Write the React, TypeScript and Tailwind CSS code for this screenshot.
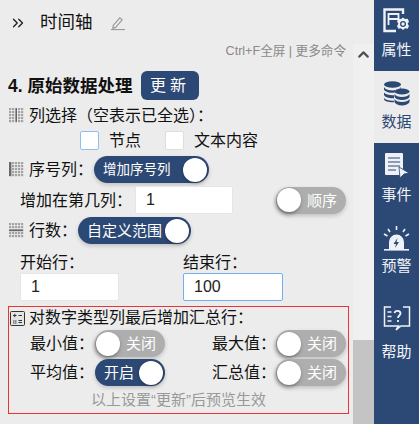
import { ChevronsRight, ChevronUp } from "lucide-react";

const Dots = ({ skipC, skipR }: { skipC?: number; skipR?: number }) => (
  <>
    {Array.from({ length: 5 }).flatMap((_, r) =>
      Array.from({ length: 5 }).map((_, c) =>
        c === skipC || r === skipR ? null : (
          <rect key={`${r}-${c}`} x={c * 3} y={r * 3} width="2.2" height="2.2" fill="#a4a4a4" />
        )
      )
    )}
  </>
);

const GridIcon = ({ kind }: { kind: "col" | "seq" | "row" }) => (
  <svg width="15" height="15" viewBox="0 0 15 15" className="shrink-0">
    {kind === "col" && (
      <>
        <Dots skipC={2} />
        <rect x="6.4" y="0" width="1.6" height="14.200" fill="#666" />
      </>
    )}
    {kind === "seq" && (
      <>
        <Dots skipC={0} />
        <rect x="0" y="0" width="2.4" height="14.200" fill="#6a6a6a" />
      </>
    )}
    {kind === "row" && (
      <>
        <Dots skipR={2} />
        <rect x="0" y="6.400" width="14.200" height="1.800" fill="#666" />
      </>
    )}
  </svg>
);

function Toggle({ label, on, width, small }: { label: string; on: boolean; width: string; small?: boolean }) {
  const text = small ? "text-[13.500px]" : "text-[15px]";
  return (
    <div
      className={`flex h-[27px] items-center justify-between rounded-full shadow-[0_2px_4px_rgba(0,0,0,0.18)] ${width} ${
        on ? "bg-[#2c4874] pl-[9px] pr-[2px]" : "bg-[#aeaeae] pl-[1px] pr-[9px]"
      }`}
    >
      {!on && <span className="h-[24px] w-[24px] rounded-full bg-white shadow-[-1px_2px_4px_rgba(0,0,0,0.4)]" />}
      <span className={`${text} leading-none whitespace-nowrap text-white`}>{label}</span>
      {on && <span className="h-[24px] w-[24px] rounded-full bg-white shadow-[0_1px_3px_rgba(0,0,0,0.35)]" />}
    </div>
  );
}

function RailItem({
  label,
  active,
  children,
  box,
  gap,
}: {
  label: string;
  active?: boolean;
  children: React.ReactNode;
  box: string;
  gap: string;
}) {
  return (
    <div className={`flex flex-col items-center ${box} ${active ? "bg-[#ececec] text-[#2c4874]" : "bg-[#2c4874] text-[#f2f5fa]"}`}>
      {children}
      <span className={`text-[15px] leading-[20px] ${gap}`}>{label}</span>
    </div>
  );
}

function Field({ value, focus, width }: { value: string; focus?: boolean; width: string }) {
  return (
    <div
      className={`flex h-[28px] items-center rounded-[2px] bg-white pl-[10px] text-[16px] text-[#222] ${width} ${
        focus ? "border border-[#6fb0f0]" : "border border-[#e6e6e6]"
      }`}
    >
      {value}
    </div>
  );
}

export default function App() {
  return (
    <div className="flex h-[424px] w-[419px] overflow-hidden bg-[#ececec] font-['Liberation_Sans','Noto_Sans_CJK_SC',sans-serif] text-[#111]">
      <div className="flex w-[353px] flex-col">
        <div className="flex h-[44px] items-center pl-[9px] pt-[1px]">
          <ChevronsRight size={18} strokeWidth={1.8} className="text-[#222]" />
          <span className="ml-[13px] text-[17.500px] leading-none">时间轴</span>
          <svg width="15" height="16" viewBox="0 0 16 16" className="ml-[17px] text-[#999]" fill="none" stroke="currentColor" strokeWidth="1.200">
            <path d="M3.500 10.500 10.500 2.500l2.500 2.200-7 8-3 .8z" />
            <path d="M1 15h15" />
          </svg>
        </div>
        <div className="mt-[-1px] pr-[7px] text-right text-[12.600px] leading-[16px] text-[#8a8a8a]">
          Ctrl+F全屏 | 更多命令
        </div>
        <div className="mt-[12px] flex items-center pl-[8px]">
          <span className="w-[133px] pt-[3px] text-[17.500px] leading-none font-bold whitespace-nowrap">4. 原始数据处理</span>
          <span className="flex h-[29px] w-[58px] items-center justify-center rounded-[6px] bg-[#2c4874] text-[16px] tracking-[4px] text-white">
            更新
          </span>
        </div>
        <div className="mt-[5px] flex h-[20px] items-center gap-[5px] pl-[9px] text-[16px] whitespace-nowrap">
          <GridIcon kind="col" />
          <span className="pt-[1px]">列选择（空表示已全选）：</span>
        </div>
        <div className="mt-[6px] flex h-[19px] items-center pl-[80px] text-[16px]">
          <span className="h-[19px] w-[19px] rounded-[2px] border border-[#8cc0f2] bg-white" />
          <span className="ml-[10px]">节点</span>
          <span className="ml-[24px] h-[19px] w-[19px] rounded-[2px] border border-[#dddddd] bg-white" />
          <span className="ml-[10px]">文本内容</span>
        </div>
        <div className="mt-[6px] flex items-center pl-[9px] text-[16px]">
          <GridIcon kind="seq" />
          <span className="ml-[5px] w-[65px]">序号列：</span>
          <Toggle label="增加序号列" on small width="w-[115px]" />
        </div>
        <div className="mt-[3px] flex items-center pl-[20px] text-[16px]">
          <span className="w-[115px] pt-[1px] whitespace-nowrap">增加在第几列：</span>
          <Field value="1" width="w-[98px]" />
          <div className="ml-[43px]">
            <Toggle label="顺序" on={false} width="w-[70px]" />
          </div>
        </div>
        <div className="mt-[3px] flex items-center pl-[9px] text-[16px]">
          <GridIcon kind="row" />
          <span className="ml-[5px] w-[49px]">行数：</span>
          <Toggle label="自定义范围" on width="w-[113px]" />
        </div>
        <div className="mt-[6px] grid w-[283px] grid-cols-[163px_100px] pl-[20px] text-[16px]">
          <div className="flex flex-col">
            <span className="h-[23px] leading-[26px]">开始行：</span>
            <Field value="1" width="w-[99px]" />
          </div>
          <div className="flex flex-col">
            <span className="h-[23px] leading-[26px]">结束行：</span>
            <Field value="100" focus width="w-[100px]" />
          </div>
        </div>
        <div className="mt-[5px] ml-[8px] flex h-[108px] w-[341px] flex-col border border-[#ee3333] text-[16px]">
          <div className="flex h-[22px] items-center gap-[4px] pl-[1px] whitespace-nowrap">
            <svg width="15" height="15" viewBox="0 0 15 15" fill="#e4e4e4" stroke="#333" className="shrink-0">
              <rect x=".5" y=".5" width="14" height="14" rx="1" />
              <path d="M3 4.500h3.500M4.750 2.800v3.400M8.500 4.500h3.500M3 10h1.500M5 10h1.500M3 12h1.500M5 12h1.500M8.500 9.500h3.500M8.500 11.500h3.500" fill="none" />
            </svg>
            <span>对数字类型列最后增加汇总行：</span>
          </div>
          <div className="mt-[1px] grid grid-cols-[182px_auto] gap-y-[2px] pl-[21px]">
            <div className="flex items-center">
              <span className="w-[65px]">最小值：</span>
              <Toggle label="关闭" on={false} width="w-[70px]" />
            </div>
            <div className="flex items-center">
              <span className="w-[64px]">最大值：</span>
              <Toggle label="关闭" on={false} width="w-[70px]" />
            </div>
            <div className="flex items-center">
              <span className="w-[65px]">平均值：</span>
              <Toggle label="开启" on width="w-[70px]" />
            </div>
            <div className="flex items-center">
              <span className="w-[64px]">汇总值：</span>
              <Toggle label="关闭" on={false} width="w-[70px]" />
            </div>
          </div>
          <div className="mt-[5px] text-center text-[15px] leading-[18px] text-[#999]">
            以上设置“更新”后预览生效
          </div>
        </div>
      </div>

      <div className="flex w-[21px] flex-col pt-[44px]">
        <div className="flex flex-1 flex-col bg-[#f0f0f0]">
          <div className="flex h-[21px] items-center justify-center">
            <ChevronUp size={17} strokeWidth={3} className="text-[#505050]" />
          </div>
          <div className="flex-1" />
          <div className="h-[84px] bg-[#c4c4c4]" />
        </div>
      </div>

      <div className="flex w-[45px] flex-col bg-[#2c4874]">
        <RailItem label="属性" box="h-[71px] shrink-0 pt-[8px]" gap="mt-[6px]">
          <svg width="27" height="26" viewBox="0 0 27 26" fill="none" className="shrink-0">
            <path d="M20 6V1.500H1.500V23H13" stroke="#eef2f8" strokeWidth="2.400" />
            <path d="M5.500 6h10v5h-10zM5.500 11v6" stroke="#eef2f8" strokeWidth="1.800" />
            <path d="M20 9.500l2 1.600 2.600-.4 1.400 2.800-1.400 2.200 1.400 2.200-1.400 2.800-2.600-.4-2 1.600-2-1.600-2.600.4-1.400-2.800 1.400-2.200-1.400-2.200 1.400-2.800 2.600.4z" fill="#eef2f8" />
            <circle cx="20" cy="16" r="3" fill="#2c4874" />
            <circle cx="20" cy="16" r="1.700" fill="#eef2f8" />
          </svg>
        </RailItem>
        <RailItem label="数据" active box="h-[72px] shrink-0 pt-[10px]" gap="mt-[5px]">
          <svg width="27" height="26" viewBox="0 0 27 26" fill="#2c4874" className="shrink-0">
            <ellipse cx="9.500" cy="3.500" rx="8.500" ry="3.200" />
            <path d="M1 6c1 2.400 5 3.400 8.500 3.400S17 8.400 18 6v1.500c-3 .3-6 1.500-6.500 4.300-4 .3-9.500-.6-10.500-3.300zM1 11.500c1.500 2 6 3 10 2.700v3c-4 .3-9-.8-10-3.200zM1 17c1.500 2 6 3 10 2.700v1.500c-4 .3-10-.7-10-3.200z" />
            <ellipse cx="19" cy="10.500" rx="7.500" ry="3" />
            <path d="M11.500 13c1 2 4 3 7.500 3s6.500-1 7.500-3v3c-1 2-4 3-7.500 3s-6.500-1-7.500-3zM11.500 18c1 2 4 3 7.500 3s6.500-1 7.500-3v3c-1 2.200-4 3.500-7.500 3.500s-6.500-1.300-7.500-3.500z" />
          </svg>
        </RailItem>
        <RailItem label="事件" box="h-[70px] shrink-0 pt-[9px]" gap="mt-[5px]">
          <svg width="26" height="28" viewBox="0 0 26 28" fill="#eef2f8" className="shrink-0">
            <path d="M2 1h16a1 1 0 0 1 1 1v15l-4 6H2a1 1 0 0 1-1-1V2a1 1 0 0 1 1-1z" />
            <path d="M4 6h12M4 10h12M4 14h12M4 18h8" stroke="#2c4874" strokeWidth="1.200" />
            <path d="M15 15l10 6-5 1-4 4z" stroke="#2c4874" strokeWidth=".8" />
          </svg>
        </RailItem>
        <RailItem label="预警" box="h-[70px] shrink-0 pt-[12px]" gap="mt-[4px]">
          <svg width="27" height="27" viewBox="0 0 27 27" fill="#eef2f8" className="shrink-0">
            <path d="M6 24v-7a7.500 7.500 0 0 1 15 0v7z" />
            <path d="M1 24h25v1.600H1z" />
            <path d="M13.500 1v4M5 4l2 3M22 4l-2 3M1 9l3.500 2M26 9l-3.500 2" stroke="#eef2f8" strokeWidth="1.600" />
            <path d="M14.500 13l-4 6h2.500l-1 4 4-6h-2.500z" fill="#2c4874" />
          </svg>
        </RailItem>
        <RailItem label="帮助" box="flex-1 pt-[22px]" gap="mt-[10px]">
          <svg width="28" height="27" viewBox="0 0 28 27" fill="none" stroke="#eef2f8" strokeWidth="1.500" className="shrink-0">
            <path d="M8 2H1.500v19h14l-2.500 4 5-4h8.500V2H20" />
            <path d="M4.500 7h4M4.500 11.500h4M4.500 16h4" />
            <path d="M11.500 8c.5-3 6-3 6 .5 0 2-2.500 2-2.500 4.500M15 15v2" strokeWidth="1.800" />
          </svg>
        </RailItem>
      </div>
    </div>
  );
}
